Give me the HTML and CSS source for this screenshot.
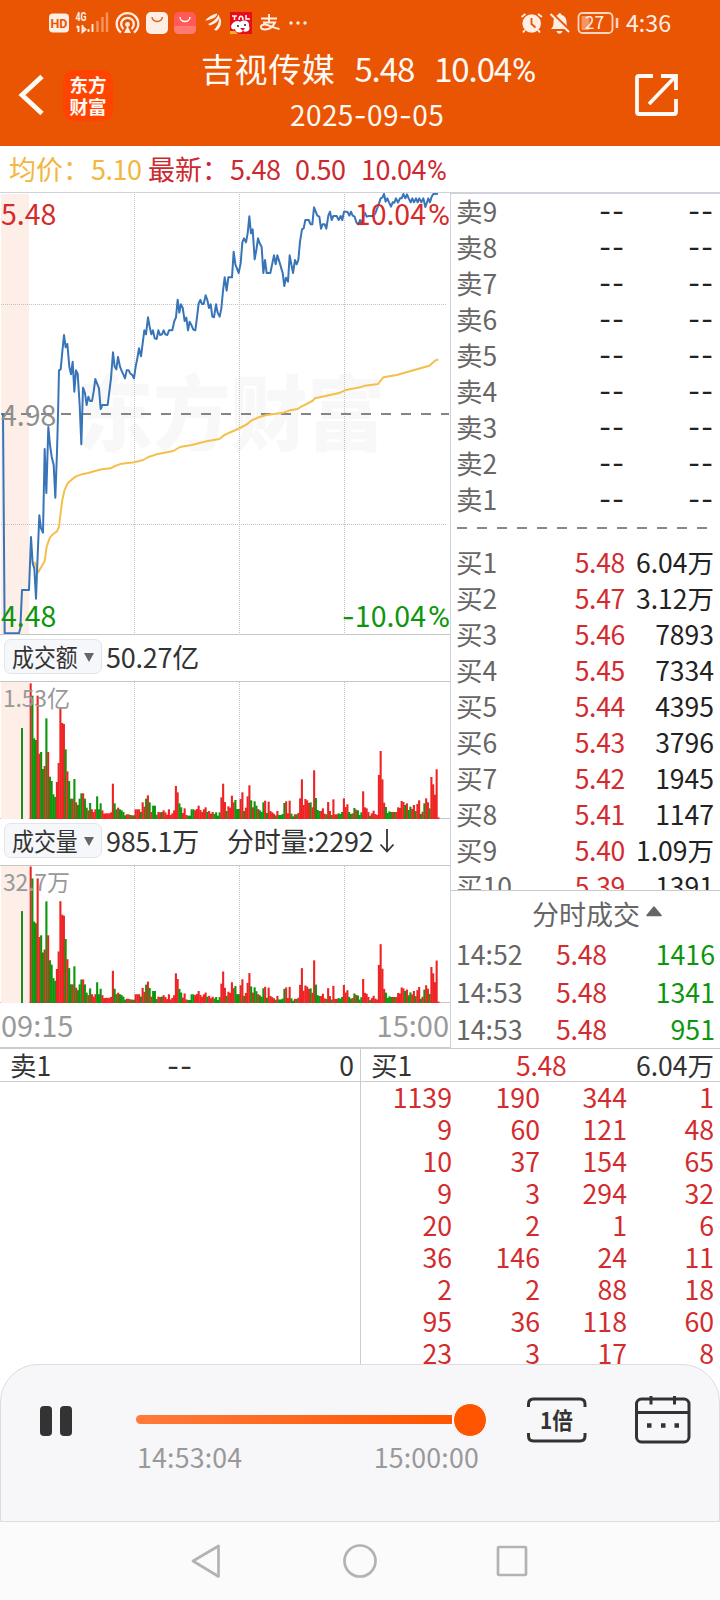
FILE: index.html
```html
<!DOCTYPE html>
<html lang="zh-CN">
<head>
<meta charset="utf-8">
<title>吉视传媒 分时</title>
<link rel="stylesheet" href="styles.css">
</head>
<body>
<div class="screen">
  <header class="top">
    <div class="status">
      <svg class="status-left" width="270" height="44" viewBox="45 0 270 44">
        <rect x="49" y="13.5" width="20" height="19" rx="4" fill="#fdeee6"/>
        <text x="59" y="27.5" class="hd" text-anchor="middle">HD</text>
        <text x="75.500" y="20.500" class="g4" textLength="11" lengthAdjust="spacingAndGlyphs">4G</text>
        <path d="M78.500 26v6M76.500 27.500l2-1.500M82.500 25v7l3-2.500-3-2.500M88.500 29v3M92.500 24v8" stroke="#fdeee6" stroke-width="1.900" fill="none"/>
        <path d="M97.500 21v11M102.500 17v15M107 12.500v19.500" stroke="#f4955f" stroke-width="2.400"/>
        <g fill="none" stroke="#fdeee6" stroke-width="2.300">
          <path d="M121 32.500a10.800 10.800 0 1 1 13 0"/><path d="M123.500 29a6.300 6.300 0 1 1 8 0"/>
        </g>
        <circle cx="127.500" cy="24.500" r="2.400" fill="#fdeee6"/><path d="M127.500 26l-3.500 7h7z" fill="#fdeee6"/>
        <rect x="146" y="12" width="22" height="22" rx="5" fill="#fdeee6"/>
        <path d="M152 17a5.200 4.500 0 0 0 10.400 0" fill="none" stroke="#ea5504" stroke-width="1.400"/>
        <rect x="174" y="12" width="22" height="22" rx="5" fill="#ff5a58"/>
        <path d="M174 26h22v3q0 5-5 5h-12q-5 0-5-5z" fill="#ff7a72"/>
        <path d="M180 17a5 4.500 0 0 0 10 0" fill="none" stroke="#fff" stroke-width="1.400"/>
        <path d="M205 20.500c4-4 8-6.500 12-7 1 3-5 6.500-12 7zM208 24c5-2 9-5.500 10.500-9.500 3 4-2 9-8.500 11zM214 30c3-3 5-7 5.500-13 3.500 5 1 11-3 13.500z" fill="#fdeee6"/>
        <rect x="230" y="12" width="22" height="22" fill="#e80b1c"/>
        <path d="M232 16h5M234.500 16v4M239 20c0-5 4-5 4 0M246 15v4h4" stroke="#fff" stroke-width="1.500" fill="none"/>
        <path d="M231 26c2-5 7-6 9-4 4-3 10-1 9 4 2 4-2 7-6 5-4 3-8 1-8-2-2 1-4 0-4-3z" fill="#fff"/>
        <circle cx="238" cy="26" r="1" fill="#222"/><circle cx="245" cy="25" r="1" fill="#222"/><path d="M240 28h5l-2 3z" fill="#e80b1c"/>
        <path d="M230 31h5l3 3h-8z" fill="#ffb020"/>
        <path d="M261 18.500h16M269 14v9M263 22.500h12c-2 4-6 7-10 7-6 0-5-5.500 0-5 4 .5 9 4 14.500 4.500" fill="none" stroke="#fdeee6" stroke-width="2"/>
        <g fill="#fdeee6"><circle cx="291" cy="23" r="1.700"/><circle cx="298" cy="23" r="1.700"/><circle cx="305" cy="23" r="1.700"/></g>
      </svg>
      <svg class="status-right" width="160" height="44" viewBox="515 0 160 44">
        <circle cx="531.700" cy="23.500" r="9.300" fill="#fdeee6"/>
        <path d="M531.500 18v6l4 3.500" fill="none" stroke="#ea5504" stroke-width="1.800"/>
        <path d="M521.500 17l4-3M542 17l-4-3M525 30l-2 2.500M538 30l2 2.500" stroke="#fdeee6" stroke-width="2"/>
        <path d="M551 29c2-2 2.500-4 2.500-7 0-4 2-6.500 4.500-7 0-2.500 3.500-2.500 3.500 0 3 .5 5 3 5 7 0 3 .5 5 3 7zM556.500 31h6c-1 3.500-5 3.500-6 0z" fill="#fdeee6"/>
        <path d="M551 12.500l19 18" stroke="#ea5504" stroke-width="2.500"/><path d="M550.500 14l18.500 18" stroke="#fdeee6" stroke-width="2"/>
        <rect x="578.500" y="13" width="34" height="20" rx="4" fill="none" stroke="#fdd5c0" stroke-width="1.800"/>
        <rect x="581.500" y="16" width="8" height="14" rx="1" fill="#f4955f"/>
        <path d="M617 18v10" stroke="#fdd5c0" stroke-width="2.500"/>
        <text x="594.500" y="28.700" class="batt" text-anchor="middle">27</text>
        <text x="626" y="32" class="clock" textLength="45" lengthAdjust="spacingAndGlyphs">4:36</text>
      </svg>
    </div>
    <div class="titlebar">
      <svg class="back" width="30" height="48" viewBox="0 0 30 48"><path d="M26 6.500L6 25l20 18.500" fill="none" stroke="#fffaf5" stroke-width="4.800"/></svg>
      <div class="logo">东方<br>财富</div>
      <div class="title">
        <h1><span>吉视传媒</span><span>5.48</span><span>10.04<s>%</s></span></h1>
        <p>2025<i>-</i>09<i>-</i>05</p>
      </div>
      <svg class="share" width="46" height="48" viewBox="0 0 46 48"><path d="M20 4H6q-2 0-2 2V40q0 2 2 2H41q2 0 2-2V27M28 4H43V18M42 5L16 32" fill="none" stroke="#fffaf5" stroke-width="3.800"/></svg>
    </div>
  </header>

  <section class="info">
    <span class="avg-label">均价：</span><span class="avg-val">5.10</span><span class="new-label">最新：</span><span class="new-val">5.48</span><span class="new-diff">0.50</span><span>10.04<s>%</s></span>
  </section>

  <main class="middle">
    <div class="charts">
      <div class="plot price-plot">
        <svg width="450" height="441" viewBox="0 24 1350 1323">
          <rect x="3" y="27" width="84" height="1320" fill="#fdeee7"/>
          <text x="228" y="778" class="watermark" textLength="926" lengthAdjust="spacingAndGlyphs">东方财富</text>
          <path class="dots" d="M403.500 27V1347M718.500 27V1347M1033.500 27V1347M3 358.500H1341M3 1018.500H1341"/>
          <path d="M3 687H1347" stroke="#858585" stroke-width="6" stroke-dasharray="30 30"/>
          <polyline class="line avg" points="98,1133 105,1133 115,1162 125,1144 134,1128 140,1085 150,1057 160,1047 170,1040 177,1026 181,990 187,945 193,917 203,895 215,884 228,874 245,868 265,864 285,858 305,853 332,850 345,843 365,836 403,832 430,825 445,816 470,808 520,798 540,786 575,780 620,769 658,762 675,749 700,738 720,729 742,717 755,706 778,696 800,690 850,683 870,676 893,672 900,667 937,648 945,640 980,632 1020,623 1035,616 1080,607 1095,602 1134,597 1150,577 1190,570 1240,556 1288,542 1305,527 1315,523"/>
          <polyline class="line now" points="5,687 9,687 14,1345 57,1345 61,1330 66,1215 87,1215 93,1056 98,1135 103,1150 108,1241 113,1110 118,991 123,1030 129,1043 134,792 139,924 145,726 150,780 155,815 161,840 166,938 171,800 174,690 177,556 182,553 187,500 192,450 197,487 202,477 208,545 213,568 218,530 223,620 228,556 233,566 239,660 244,778 249,608 255,625 260,660 265,635 270,648 276,648 281,620 286,582 291,595 297,610 302,672 307,660 323,660 328,620 333,580 339,502 344,545 349,553 354,516 360,545 365,558 370,568 375,580 380,556 386,556 391,566 397,570 402,580 407,545 412,520 417,490 423,514 428,475 433,436 438,448 444,397 449,425 454,448 459,436 464,460 470,462 475,436 480,450 486,448 491,436 496,448 502,450 507,436 517,436 523,408 528,397 533,344 538,383 543,358 548,368 554,408 559,398 564,436 569,410 575,422 580,434 586,436 591,397 596,355 601,345 606,357 611,357 617,331 622,345 627,369 632,358 637,395 642,397 648,358 653,383 659,395 664,370 669,318 674,277 680,317 685,277 696,277 701,200 706,238 716,264 722,235 727,172 732,160 738,172 743,145 748,94 753,145 758,133 764,223 769,195 774,160 779,175 785,186 790,264 795,225 800,264 811,264 816,240 822,211 827,238 832,211 838,230 848,264 853,303 858,278 864,290 869,211 879,264 885,225 890,238 895,225 900,170 906,133 911,130 916,105 926,105 932,118 937,118 942,67 952,92 958,95 963,131 968,118 974,118 979,131 985,92 990,80 995,105 1000,93 1010,93 1016,105 1022,93 1027,105 1032,80 1042,80 1048,92 1053,80 1058,92 1064,95 1069,112 1075,118 1080,105 1085,118 1090,95 1095,84 1100,95 1106,93 1121,93 1126,85 1137,55 1142,40 1147,38 1152,27 1157,50 1162,40 1167,52 1173,65 1178,52 1183,53 1188,40 1194,53 1200,40 1205,40 1210,27 1216,40 1221,28 1226,40 1232,52 1237,40 1242,52 1248,40 1253,52 1258,40 1264,52 1270,40 1276,66 1281,52 1285,40 1290,52 1295,35 1300,27 1314,26"/>
        </svg>
        <div class="scale"><div class="red"><span>5.48</span><span>10.04<s>%</s></span></div><div class="mid"><span>4.98</span></div><div class="green"><span>4.48</span><span><i>-</i>10.04<s>%</s></span></div></div>
      </div>
      <div class="metric"><span class="picker"><b>成交额</b><em></em></span><span>50.27亿</span></div>
      <div class="plot bars-plot"><svg id="amount" width="450" height="137" viewBox="0 0 450 137"></svg><span class="max">1.53亿</span></div>
      <div class="metric second"><span class="picker"><b>成交量</b><em></em></span><span>985.1万</span><span class="minute">分时量:2292<svg width="16" height="26" viewBox="0 0 16 26"><path d="M8 1v22M1.500 16.500L8 23.500l6.500-7" fill="none" stroke="#333" stroke-width="1.800"/></svg></span></div>
      <div class="plot bars-plot"><svg id="volume" width="450" height="137" viewBox="0 0 450 137"></svg><span class="max">32.7万</span></div>
      <div class="times"><span>09:15</span><span>15:00</span></div>
    </div>

    <aside class="side">
      <div class="book">
        <div class="row"><span>卖9</span><u>--</u><u>--</u></div>
        <div class="row"><span>卖8</span><u>--</u><u>--</u></div>
        <div class="row"><span>卖7</span><u>--</u><u>--</u></div>
        <div class="row"><span>卖6</span><u>--</u><u>--</u></div>
        <div class="row"><span>卖5</span><u>--</u><u>--</u></div>
        <div class="row"><span>卖4</span><u>--</u><u>--</u></div>
        <div class="row"><span>卖3</span><u>--</u><u>--</u></div>
        <div class="row"><span>卖2</span><u>--</u><u>--</u></div>
        <div class="row"><span>卖1</span><u>--</u><u>--</u></div>
        <div class="split"></div>
        <div class="row"><span>买1</span><b>5.48</b><strong>6.04万</strong></div>
        <div class="row"><span>买2</span><b>5.47</b><strong>3.12万</strong></div>
        <div class="row"><span>买3</span><b>5.46</b><strong>7893</strong></div>
        <div class="row"><span>买4</span><b>5.45</b><strong>7334</strong></div>
        <div class="row"><span>买5</span><b>5.44</b><strong>4395</strong></div>
        <div class="row"><span>买6</span><b>5.43</b><strong>3796</strong></div>
        <div class="row"><span>买7</span><b>5.42</b><strong>1945</strong></div>
        <div class="row"><span>买8</span><b>5.41</b><strong>1147</strong></div>
        <div class="row"><span>买9</span><b>5.40</b><strong>1.09万</strong></div>
        <div class="row"><span>买10</span><b>5.39</b><strong>1391</strong></div>
      </div>
      <div class="ticks">
        <h2>分时成交<svg width="16" height="11" viewBox="0 0 16 11"><path d="M8 1l7 8.500H1z" fill="#666" stroke="#666" stroke-width="1.500" stroke-linejoin="round"/></svg></h2>
        <div class="tick"><span>14:52</span><b>5.48</b><strong>1416</strong></div>
        <div class="tick"><span>14:53</span><b>5.48</b><strong>1341</strong></div>
        <div class="tick"><span>14:53</span><b>5.48</b><strong>951</strong></div>
      </div>
    </aside>
  </main>

  <section class="queues">
    <div class="queue sell"><div class="qhead"><span>卖1</span><u>--</u><strong>0</strong></div></div>
    <div class="queue buy">
      <div class="qhead"><span>买1</span><b>5.48</b><strong>6.04万</strong></div>
      <div class="orders">
        <span>1139</span><span>190</span><span>344</span><span>1</span>
        <span>9</span><span>60</span><span>121</span><span>48</span>
        <span>10</span><span>37</span><span>154</span><span>65</span>
        <span>9</span><span>3</span><span>294</span><span>32</span>
        <span>20</span><span>2</span><span>1</span><span>6</span>
        <span>36</span><span>146</span><span>24</span><span>11</span>
        <span>2</span><span>2</span><span>88</span><span>18</span>
        <span>95</span><span>36</span><span>118</span><span>60</span>
        <span>23</span><span>3</span><span>17</span><span>8</span>
      </div>
    </div>
  </section>

  <section class="player">
    <div class="pause"><i></i><i></i></div>
    <div class="progress">
      <div class="bar"><div class="track"></div><div class="thumb"></div></div>
      <div class="stamps"><span>14:53:04</span><span>15:00:00</span></div>
    </div>
    <svg class="speed" width="60" height="48" viewBox="0 0 60 48"><path d="M1.500 11V8q0-5 5-5H53q5 0 5 5v3M1.500 37v3q0 5 5 5H53q5 0 5-5v-3" fill="none" stroke="#333" stroke-width="3"/><text x="13" y="32.500" class="speed-text" textLength="33" lengthAdjust="spacingAndGlyphs">1倍</text></svg>
    <svg class="calendar" width="56" height="50" viewBox="0 0 56 50"><rect x="1.500" y="4" width="52.500" height="43" rx="5" fill="none" stroke="#333" stroke-width="3"/><path d="M2 17.500H54" stroke="#333" stroke-width="3"/><path d="M16 1v8.500M39.500 1v8.500" stroke="#333" stroke-width="3"/><path d="M12 30.500h4.500M26 30.500h4.500M39.500 30.500h4.500" stroke="#333" stroke-width="4.500"/></svg>
  </section>

  <nav class="nav">
    <svg width="340" height="40" viewBox="0 0 340 40" fill="none" stroke="#b3b3b3" stroke-width="2.700" stroke-linejoin="round"><path d="M28.500 5V35.500L3 20z"/><circle cx="170" cy="20" r="15.500"/><rect x="308" y="6" width="28" height="28" rx="1"/></svg>
  </nav>
</div>
<script src="bars.js"></script>
</body>
</html>
```

FILE: styles.css
```css
* { box-sizing: border-box; }
body {
  margin: 0;
  font-family: "Noto Sans CJK SC", "Noto Sans", sans-serif;
  font-size: 26.5px;
  line-height: 36px;
  color: #333;
  background: #fff;
}
h1, h2, p { margin: 0; font-weight: 400; }
b, strong, i, em, u, s { font-weight: 400; font-style: normal; text-decoration: none; }
u, h1 i, p i, .scale i { font-family: Inter, sans-serif; }
s { font-family: Roboto, sans-serif; margin-left: 1px; line-height: 1; }
u { letter-spacing: .8px; line-height: 34px; }
svg { display: block; flex: none; }

.screen { width: 720px; height: 1600px; display: flex; flex-direction: column; overflow: hidden; }

.top { height: 146px; background: #ea5504; color: #fffaf5; }
.status { height: 44px; display: flex; justify-content: space-between; padding: 0 45px; }
.hd { font: 700 12.5px Roboto, sans-serif; fill: #ea5504; }
.g4 { font: 700 12px Roboto, sans-serif; fill: #fdeee6; }
.batt { font: 17.5px "Noto Sans CJK SC", sans-serif; fill: #fdeee6; }
.clock { font: 23.5px "Noto Sans CJK SC", sans-serif; fill: #fdeee6; }
.titlebar { height: 102px; display: flex; align-items: flex-start; padding-left: 16px; }
.back { margin-top: 26px; }
.logo {
  width: 50px; height: 51px; margin: 26px 0 0 17px; padding-top: 3px;
  border-radius: 10px; background: #ff4400;
  font-size: 18.5px; line-height: 22px; font-weight: 700; text-align: center;
}
.title { flex: 1; margin-left: 38px; white-space: nowrap; }
h1 { display: flex; font-size: 33px; line-height: 48px; padding-left: 50px; letter-spacing: -1.1px; }
h1 span:first-child { letter-spacing: .6px; }
h1 span:nth-child(2) { margin-left: 19px; }
h1 span:nth-child(3) { margin-left: 20px; }
.title p { font-size: 28px; line-height: 40px; padding-left: 139px; margin-top: 2px; letter-spacing: .4px; }
.share { margin: 28px 41px 0 0; }

.info { height: 46px; padding-left: 9px; font-size: 27px; line-height: 45px; color: #cc2a30; display: flex; white-space: nowrap; letter-spacing: -.5px; }
.avg-label, .new-label { letter-spacing: 0; }
.avg-label { width: 82px; }
.avg-val { width: 57px; }
.avg-label, .avg-val { color: #f2b73c; }
.new-label { width: 82px; }
.new-val { width: 65px; }
.new-diff { width: 66px; }

.middle { height: 856px; display: flex; border-top: 1px solid #cfd2da; }
.charts { width: 450px; flex: none; }
.plot { display: grid; border-bottom: 1px solid #c6c6c6; }
.plot > * { grid-area: 1 / 1; }
.price-plot { height: 442px; }
.watermark { font: 900 246px "Noto Sans CJK SC", sans-serif; fill: #f8f8f8; }
.dots { stroke: #c2c2c2; stroke-width: 3; stroke-dasharray: 3 3; fill: none; }
.bars-plot .dots { stroke-width: 1; stroke-dasharray: 1 1; }
.line { fill: none; stroke-width: 6; stroke-linejoin: round; }
.avg { stroke: #f3bf4d; }
.now { stroke: #3874b8; }
.scale { display: flex; flex-direction: column; justify-content: space-between; padding: 1px 0 0 1px; margin-bottom: -2px; font-size: 28.5px; line-height: 38px; }
.scale div { display: flex; justify-content: space-between; }
.scale .red { color: #d52b2b; }
.scale .mid { color: #8f8f8f; }
.scale .green { color: #0d960d; }
.scale s { margin-left: 2px; font-size: 30px; }
.metric { height: 46px; display: flex; align-items: center; padding-left: 4px; font-size: 27px; line-height: 34px; white-space: nowrap; padding-bottom: 3px; letter-spacing: -.25px; }
.metric > span:nth-child(2) { margin-left: 4px; }
.picker { width: 98px; height: 35px; border: 1px solid #e1e4ea; border-radius: 7px; background: #f6f7fa; display: flex; align-items: center; flex: none; }
.picker b { font-size: 24.5px; line-height: 30px; width: 79px; padding-left: 7px; letter-spacing: 0; transform: scaleX(.895); transform-origin: 7px 50%; }
.picker em { border: 5.5px solid transparent; border-top: 9px solid #666; border-bottom: 0; margin-left: 0; margin-top: 2px; }
.minute { margin-left: 28px; display: flex; align-items: center; }
.minute svg { margin: 0 0 0 6px; }
.bars-plot { height: 138px; border-top: 1px solid #c6c6c6; }
.max { font-size: 23px; line-height: 30px; color: #999; padding-left: 3px; letter-spacing: -.2px; }
.times { height: 45px; display: flex; justify-content: space-between; padding: 0 1px; font-size: 29px; line-height: 43px; color: #999; border-bottom: 1px solid #ccc; }

.side { flex: 1; border-left: 1px solid #cfd2da; border-top: 1px solid #cfd2da; }
.book { height: 697px; overflow: hidden; border-bottom: 1px solid #ccc; }
.row { display: grid; grid-template-columns: 60px 109px 89px; padding-left: 5px; height: 36px; line-height: 33px; white-space: nowrap; color: #666; }
.row > :nth-child(n+2) { text-align: right; }
.row b, .tick b, .qhead b { color: #d32b2e; letter-spacing: -.3px; }
.row u, .row strong { color: #222; }
.split { height: 27px; display: flex; }
.split::before { content: ""; height: 2px; width: 250px; margin: 9px 0 0 6px; background: repeating-linear-gradient(90deg, #888 0 10px, transparent 10px 20px); }
h2 { height: 44px; font-size: 27px; line-height: 43px; color: #666; display: flex; align-items: center; padding-left: 81px; }
h2 svg { margin: 0 0 4px 6px; }
.tick { display: grid; grid-template-columns: 100px 60px 99px; padding-left: 5px; height: 37.500px; line-height: 38px; color: #666; font-size: 26.7px; }
.tick strong { text-align: right; color: #0d960d; }

.queues { height: 316px; display: flex; border-top: 1px solid #ccc; }
.queue { width: 360px; flex: none; }
.buy { border-left: 1px solid #ccc; }
.qhead { height: 33px; line-height: 32px; border-bottom: 1px solid #ccc; display: grid; padding-left: 10px; white-space: nowrap; }
.qhead strong { text-align: right; }
.sell .qhead { grid-template-columns: 157px 100px 87px; }
.buy .qhead { grid-template-columns: 145px 100px 98px; }
.orders { display: grid; grid-template-columns: 91px 88px 87px 87px; line-height: 32px; color: #d32b2e; text-align: right; font-size: 26.7px; margin-top: -1px; }

.player {
  height: 158px; border: 1px solid #ddd; border-radius: 38px 38px 0 0; background: #f7f7fa;
  display: flex; align-items: flex-start;
}
.pause { display: flex; gap: 8px; margin: 41px 0 0 39px; width: 96px; }
.pause i { width: 12px; height: 30px; border-radius: 4px; background: #333; }
.progress { width: 351px; }
.bar { height: 34px; margin-top: 38px; display: flex; align-items: center; }
.track { width: 316px; height: 9px; margin-top: -1px; border-radius: 5px 0 0 5px; background: linear-gradient(90deg, #ff7a3a, #ff5500); }
.thumb { width: 34px; height: 34px; border: 1px solid #fff; border-radius: 50%; background: #ff5500; margin-left: 1px; }
.stamps { display: flex; justify-content: space-between; font-size: 26.7px; color: #999; padding: 2px 8px 0 1px; letter-spacing: .2px; }
.speed { margin: 31px 0 0 40px; }
.speed-text { font: 700 23px "Noto Sans CJK SC", sans-serif; fill: #333; }
.calendar { margin: 30px 0 0 48px; }
.nav { flex: 1; background: #fbfbfb; display: flex; justify-content: center; padding-top: 19px; }
```

FILE: bars.js
```js
// One bar per trading minute: height in thirds of a pixel, then r (up) or g (down).
const minutes = ("407r 370g 242g 237g 370r 196r 201g 150g 159r 302g 201r 127g 114g 74g 66g 111r 168r 332r 288r 285r " +
  "209g 143r 114g 61g 61r 120g 50r 42g 61g 77g 77r 61g 34g 26r 48g 29r 21r 29r 68g 29g 47g 26r 16r 17r 17r 17r 20r 106r 47g 29g " +
  "34r 29g 26g 21g 11g 14r 14r 12g 11r 11g 29r 29r 29r 21g 50r 37r 61g 71r 50g 21r 40g 40g 13g 21r 20r 21g 26r 20r 13r 29r " +
  "12r 17r 26r 99r 80r 47g 35g 18r 32r 12r 10g 10g 29g 29g 26r 30r 40r 27r 21r 29r 35r 21g 24r 16r 21r 15g 20g 10g 20g 65r " +
  "106r 51r 24g 38r 34r 70r 50r 57g 30g 30g 60r 80r 24g 34r 68r 101r 56g 35r 53g 40g 30r 26g 21g 50g 55r 18g 52r 24r 20r 16r " +
  "11g 24r 12g 12g 15g 48g 53r 17r 55r 16g 8g 14r 14g 18r 62r 119r 42r 60r 56r 48r 50g 35r 146r 63g 27g 24g 24r 32r 16r 14g " +
  "51r 24r 12g 59r 14r 14r 17g 15g 21g 62r 36r 44r 21g 15g 17r 33g 28r 26g 12g 20g 83r 35r 32r 21r 10g 17r 25r 15r 12r 132r " +
  "204r 119r 49r 36g 18g 23g 21g 21r 21g 21r 35r 33r 54r 51r 42g 47r 27g 37g 30r 42r 24g 45r 56r 15g 22r 47g 62r 50r 32g 126r " +
  "104r 73r 149r 5r").split(" ");

const colors = { r: "#ee2424", g: "#0d960d" };
const base = 137;

function draw(id, ratio) {
  let out = '<rect x="1" y="0" width="28" height="137" fill="#fdeee7"/>' +
    '<path class="dots" d="M134.500 0V137M239.500 0V137M344.500 0V137"/>';
  out += `<rect x="21" y="${base - 91 * ratio(0)}" width="2" height="${91 * ratio(0)}" fill="#1f8a1f"/>`;
  minutes.forEach((m, i) => {
    const h = Math.min(136.5, parseInt(m, 10) / 3 * ratio(i));
    out += `<rect x="${29.6 + 1.75 * i}" y="${base - h}" width="2.1" height="${h}" fill="${colors[m.slice(-1)]}"/>`;
  });
  document.getElementById(id).innerHTML = out;
}

draw("amount", () => 1);
draw("volume", i => i < 15 ? 1.01 : 0.925 - 0.0003 * i);
```
